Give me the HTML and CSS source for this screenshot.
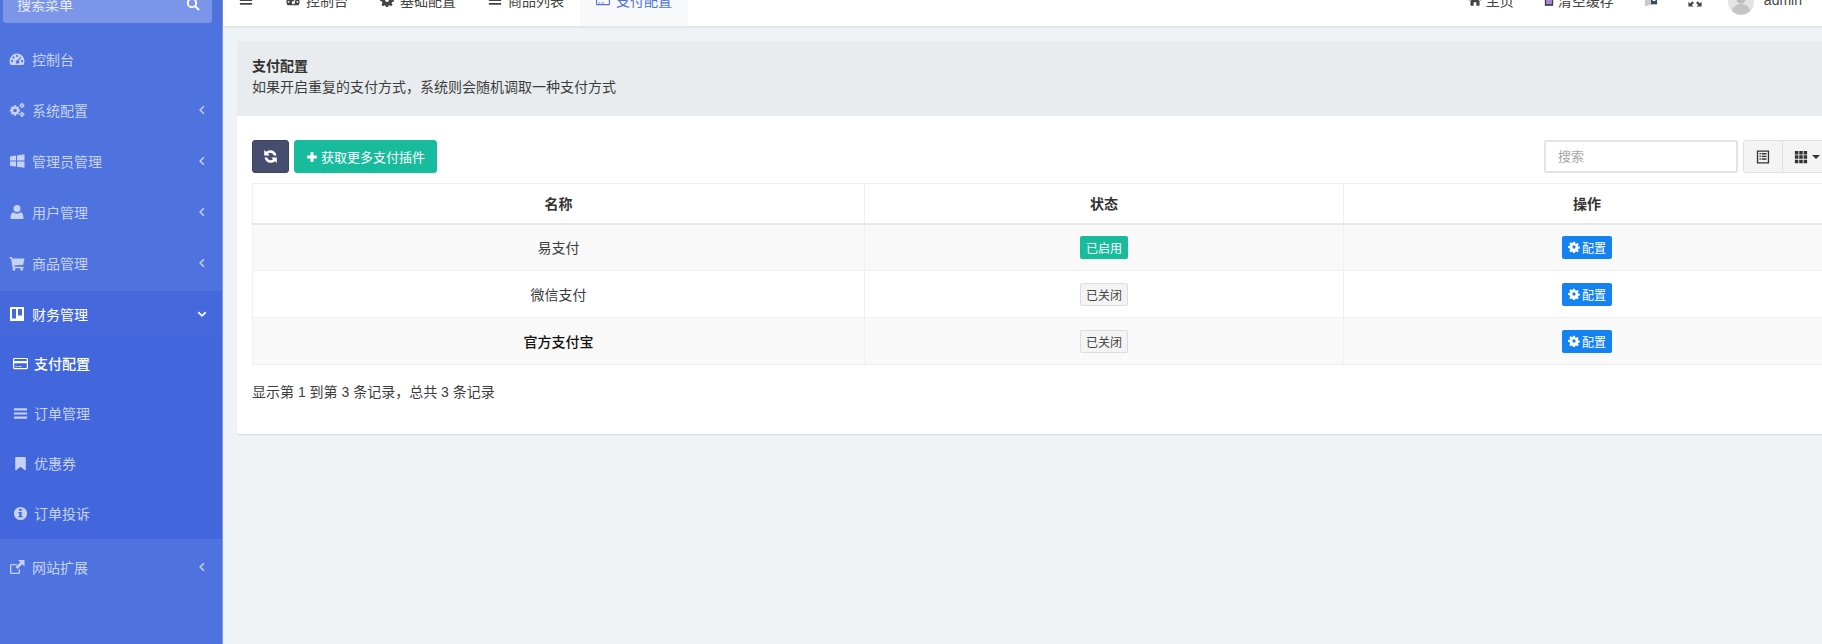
FILE: index.html
```html
<!DOCTYPE html>
<html lang="zh-CN">
<head>
<meta charset="utf-8">
<title>支付配置</title>
<link rel="stylesheet" href="styles.css">
</head>
<body>
<svg class="defs" width="0" height="0" aria-hidden="true">
  <symbol id="i-dash" viewBox="0 0 16 16"><path fill-rule="evenodd" d="M8 2.500a7.500 7.500 0 0 1 7.500 7.500c0 1.400-.4 2.700-1 3.800-.2.200-.4.200-.6.200H2.100c-.2 0-.4 0-.6-.2-.6-1.100-1-2.400-1-3.800A7.500 7.500 0 0 1 8 2.500zM3 9a1.100 1.100 0 1 0 0 2.200A1.100 1.100 0 0 0 3 9zm1.500-3.600a1.100 1.100 0 1 0 0 2.200 1.100 1.100 0 0 0 0-2.200zM8 3.900a1.100 1.100 0 1 0 0 2.200 1.100 1.100 0 0 0 0-2.200zM13 9a1.100 1.100 0 1 0 0 2.200A1.100 1.100 0 0 0 13 9zm-1.600-3.300L8.900 9.300a1.700 1.700 0 1 0 .9.600l2.400-3.700z"/></symbol>
  <symbol id="i-cogs" viewBox="0 0 16 16"><g fill="none" stroke="currentColor"><circle cx="6" cy="8.500" r="3" stroke-width="2.400"/><path stroke-width="2" d="M6 3.200v1.500M6 12.300v1.500M.8 8.500h1.500M9.700 8.500h1.500M2.400 4.900l1 1M8.600 11.100l1 1M2.400 12.100l1-1M8.600 5.900l1-1"/><circle cx="13" cy="3.500" r="1.400" stroke-width="1.500"/><circle cx="13" cy="12.500" r="1.400" stroke-width="1.500"/><path stroke-width="1.100" d="M13 .8v1M13 5.200v1M10.400 3.500h1M14.600 3.500h1M13 9.800v1M13 14.200v1M10.400 12.500h1M14.600 12.500h1"/></g></symbol>
  <symbol id="i-win" viewBox="0 0 16 16"><path d="M1 3.500l6-.9v5H1zM8 2.400l7.500-1.100v6.300H8zM1 8.600h6v5l-6-.9zM8 8.600h7.500v6.200L8 13.700z"/></symbol>
  <symbol id="i-user" viewBox="0 0 16 16"><circle cx="8" cy="4.500" r="3.500"/><path d="M2.500 15c-.6 0-1-.4-1-1 0-3 .8-5.500 3-5.800C5.300 9 6.600 9.500 8 9.500s2.700-.5 3.500-1.300c2.200.3 3 2.800 3 5.800 0 .6-.4 1-1 1z"/></symbol>
  <symbol id="i-cart" viewBox="0 0 16 16"><path d="M.5 2h2.700l.4 1.600H15.500l-1.300 6.100-9 .9.300 1.200h9v1.400H3.700L2 3.400H.5z"/><circle cx="5" cy="14.300" r="1.400"/><circle cx="12.700" cy="14.300" r="1.400"/></symbol>
  <symbol id="i-trello" viewBox="0 0 16 16"><path fill-rule="evenodd" d="M1.500 1h13c.3 0 .5.200.5.500v13c0 .3-.2.500-.5.500h-13a.5.500 0 0 1-.5-.5v-13c0-.3.200-.5.500-.5zM3 3v9.500h4V3zm6 0v6.500h4V3z"/></symbol>
  <symbol id="i-card" viewBox="0 0 16 16"><path fill-rule="evenodd" d="M1.500 2h13c.8 0 1.500.7 1.500 1.500v9c0 .8-.7 1.500-1.500 1.500h-13C.7 14 0 13.300 0 12.500v-9C0 2.700.7 2 1.500 2zM1.300 3.300v1.900h13.400V3.300zm0 4.300v5.100h13.400V7.600zM2.500 10.800h2.300v.9H2.500zm3.300 0h3.500v.9H5.800z"/></symbol>
  <symbol id="i-bars" viewBox="0 0 16 16"><path d="M1 2.500h14v2.200H1zM1 6.900h14v2.200H1zM1 11.300h14v2.200H1z"/></symbol>
  <symbol id="i-bookmark" viewBox="0 0 16 16"><path d="M3 1h10c.4 0 .6.300.6.700v13c0 .5-.5.700-.9.400L8 11.500l-4.700 3.600c-.4.300-.9.100-.9-.4v-13C2.400 1.300 2.600 1 3 1z"/></symbol>
  <symbol id="i-info" viewBox="0 0 16 16"><path fill-rule="evenodd" d="M8 1a7 7 0 1 1 0 14A7 7 0 0 1 8 1zM6.800 3v2.200h2.400V3zM5.800 6.400v1.300h1v3H5.800V12h4.400v-1.300h-1V6.400z"/></symbol>
  <symbol id="i-ext" viewBox="0 0 16 16"><path d="M12 9v3.500c0 .8-.7 1.500-1.500 1.500h-7C2.700 14 2 13.300 2 12.500v-7C2 4.700 2.700 4 3.500 4H9v1.300H3.800c-.3 0-.5.200-.5.500v6.400c0 .3.200.5.500.5h6.400c.3 0 .5-.2.500-.5V9z" transform="translate(-1 1)"/><path d="M9 1h6.500v6.500l-2.300-2.300L8.400 10 6.500 8.100l4.800-4.800z"/></symbol>
  <symbol id="i-left" viewBox="0 0 16 16"><path fill="none" stroke="currentColor" stroke-width="2" d="M10.500 3L5.500 8l5 5"/></symbol>
  <symbol id="i-down" viewBox="0 0 16 16"><path fill="none" stroke="currentColor" stroke-width="2.200" d="M3 5.500l5 5 5-5"/></symbol>
  <symbol id="i-search" viewBox="0 0 16 16"><circle cx="6.800" cy="6.800" r="4.800" fill="none" stroke="currentColor" stroke-width="2.200"/><path d="M10 11.600l1.600-1.600 3.900 3.900c.2.200.2.500 0 .7l-.9.900c-.2.200-.5.200-.7 0z"/></symbol>
  <symbol id="i-refresh" viewBox="0 0 16 16"><path d="M14.300 7h-2.900A3.600 3.600 0 0 0 5.300 5.100l1.800 1.800H1.300V1.100l1.900 1.900A6.700 6.700 0 0 1 14.300 7zM1.700 9h2.900a3.600 3.600 0 0 0 6.100 1.900L8.900 9.100h5.800v5.800l-1.900-1.900A6.700 6.700 0 0 1 1.700 9z"/></symbol>
  <symbol id="i-plus" viewBox="0 0 16 16"><path d="M6 1.500h4V6h4.500v4H10v4.500H6V10H1.500V6H6z"/></symbol>
  <symbol id="i-gear" viewBox="0 0 16 16"><path fill-rule="evenodd" d="M6.800 1h2.400l.4 2 1.300.6 1.700-1.100 1.700 1.700-1.100 1.700.6 1.300 2 .4v2.400l-2 .4-.6 1.300 1.100 1.700-1.700 1.700-1.700-1.100-1.300.6-.4 2H6.800l-.4-2-1.300-.6-1.700 1.100-1.700-1.700 1.100-1.700L2.200 9.600l-2-.4V6.800l2-.4.600-1.300-1.100-1.700 1.700-1.700 1.700 1.100 1.300-.6zM8 5.800a2.200 2.200 0 1 0 0 4.400 2.200 2.200 0 0 0 0-4.400z"/></symbol>
  <symbol id="i-home" viewBox="0 0 16 16"><path d="M8 1.500l7.500 6.300-.8 1L8 3.300 1.300 8.800l-.8-1zM8 4.600l5.200 4.300V14c0 .3-.2.500-.5.500H9.500v-4h-3v4H3.300c-.3 0-.5-.2-.5-.5V8.900z"/></symbol>
  <symbol id="i-trash" viewBox="0 0 12 16"><path d="M1 1h10v14H1z" fill="#3f3a4f"/><path d="M2.500 3h7v10h-7z" fill="#a78ad0"/></symbol>
  <symbol id="i-lang" viewBox="0 0 16 16"><path fill="#c9c9c9" d="M1 3l7-2v12l-7 2z"/><path fill="#3c4a66" d="M8 3h7v10H8z"/><path fill="#fff" d="M10 5h3v1h-3zM10 8h3v1h-3z"/></symbol>
  <symbol id="i-expand" viewBox="0 0 16 16"><path d="M8 0l3.500 3.500H9V7H7V3.500H4.500zM.5 15.500V10l2 2L5 9.500 6.800 11.300 4.300 13.800l2 1.700zM15.500 15.500V10l-2 2L11 9.500 9.200 11.300l2.500 2.500-2 1.700z"/></symbol>
  <symbol id="i-listalt" viewBox="0 0 16 16"><path fill-rule="evenodd" d="M1 .5h14v15H1zM2.500 2v12h11V2zM4 3.500h1.500V5H4zM6.500 3.500H12V5H6.500zM4 6.500h1.500V8H4zM6.500 6.500H12V8H6.500zM4 9.500h1.500V11H4zM6.500 9.500H12V11H6.500z"/></symbol>
  <symbol id="i-th" viewBox="0 0 16 16"><path d="M1 1h4v4H1zM6 1h4v4H6zM11 1h4v4h-4zM1 6h4v4H1zM6 6h4v4H6zM11 6h4v4h-4zM1 11h4v4H1zM6 11h4v4H6zM11 11h4v4h-4z"/></symbol>
</svg>

<div class="app">
  <aside class="sidebar">
    <div class="side-search">
      <span>搜索菜单</span>
      <svg class="ico side-search-ico"><use href="#i-search"/></svg>
    </div>
    <nav class="menu">
      <a class="menu-row"><svg class="ico"><use href="#i-dash"/></svg><span class="menu-text">控制台</span></a>
      <a class="menu-row"><svg class="ico"><use href="#i-cogs"/></svg><span class="menu-text">系统配置</span><svg class="chev"><use href="#i-left"/></svg></a>
      <a class="menu-row"><svg class="ico"><use href="#i-win"/></svg><span class="menu-text">管理员管理</span><svg class="chev"><use href="#i-left"/></svg></a>
      <a class="menu-row"><svg class="ico"><use href="#i-user"/></svg><span class="menu-text">用户管理</span><svg class="chev"><use href="#i-left"/></svg></a>
      <a class="menu-row"><svg class="ico"><use href="#i-cart"/></svg><span class="menu-text">商品管理</span><svg class="chev"><use href="#i-left"/></svg></a>
      <div class="menu-group">
        <a class="menu-row menu-row-open"><svg class="ico"><use href="#i-trello"/></svg><span class="menu-text">财务管理</span><svg class="chev"><use href="#i-down"/></svg></a>
        <div class="submenu">
          <a class="sub-row sub-row-active"><svg class="ico"><use href="#i-card"/></svg><span>支付配置</span></a>
          <a class="sub-row"><svg class="ico"><use href="#i-bars"/></svg><span>订单管理</span></a>
          <a class="sub-row"><svg class="ico"><use href="#i-bookmark"/></svg><span>优惠券</span></a>
          <a class="sub-row"><svg class="ico"><use href="#i-info"/></svg><span>订单投诉</span></a>
        </div>
      </div>
      <a class="menu-row"><svg class="ico"><use href="#i-ext"/></svg><span class="menu-text">网站扩展</span><svg class="chev"><use href="#i-left"/></svg></a>
    </nav>
  </aside>

  <div class="main">
    <header class="topbar">
      <a class="toggle"><svg class="ico"><use href="#i-bars"/></svg></a>
      <a class="tab"><svg class="ico"><use href="#i-dash"/></svg>控制台</a>
      <a class="tab"><svg class="ico"><use href="#i-gear"/></svg>基础配置</a>
      <a class="tab"><svg class="ico"><use href="#i-bars"/></svg>商品列表</a>
      <a class="tab tab-active"><svg class="ico"><use href="#i-card"/></svg>支付配置</a>
      <div class="top-right">
        <a class="top-link"><svg class="ico"><use href="#i-home"/></svg>主页</a>
        <a class="top-link"><svg class="ico ico-trash"><use href="#i-trash"/></svg>清空缓存</a>
        <a class="top-link"><svg class="ico ico-small"><use href="#i-lang"/></svg></a>
        <a class="top-link"><svg class="ico ico-small"><use href="#i-expand"/></svg></a>
        <a class="top-user">
          <svg class="avatar" viewBox="0 0 26 26"><circle cx="13" cy="13" r="13" fill="#e4e4e4"/><circle cx="13" cy="10" r="4.500" fill="#bdbdbd"/><path d="M4 22c1-5 5-7 9-7s8 2 9 7a13 13 0 0 1-18 0z" fill="#c4c4c4"/></svg>
          <span>admin</span>
        </a>
      </div>
    </header>

    <main class="content">
      <section class="box">
        <div class="box-head">
          <div class="box-title">支付配置</div>
          <div>如果开启重复的支付方式，系统则会随机调取一种支付方式</div>
        </div>
        <div class="box-body">
          <div class="toolbar">
            <button class="btn btn-dark"><svg class="ico"><use href="#i-refresh"/></svg></button>
            <button class="btn btn-green"><svg class="ico ico-plus"><use href="#i-plus"/></svg>获取更多支付插件</button>
            <input class="search" type="text" placeholder="搜索">
            <div class="btn-group">
              <button class="tool"><svg class="ico"><use href="#i-listalt"/></svg></button>
              <button class="tool tool-wide"><svg class="ico"><use href="#i-th"/></svg><span class="caret"></span></button>
            </div>
          </div>
          <table class="grid">
            <colgroup><col class="col-name"><col class="col-state"><col class="col-op"></colgroup>
            <thead>
              <tr><th>名称</th><th>状态</th><th>操作</th></tr>
            </thead>
            <tbody>
              <tr>
                <td>易支付</td>
                <td><span class="tag tag-on">已启用</span></td>
                <td><a class="tag tag-cfg"><svg class="ico ico-tag"><use href="#i-gear"/></svg>配置</a></td>
              </tr>
              <tr>
                <td>微信支付</td>
                <td><span class="tag tag-off">已关闭</span></td>
                <td><a class="tag tag-cfg"><svg class="ico ico-tag"><use href="#i-gear"/></svg>配置</a></td>
              </tr>
              <tr>
                <td class="strong">官方支付宝</td>
                <td><span class="tag tag-off">已关闭</span></td>
                <td><a class="tag tag-cfg"><svg class="ico ico-tag"><use href="#i-gear"/></svg>配置</a></td>
              </tr>
            </tbody>
          </table>
          <div class="summary">显示第 1 到第 3 条记录，总共 3 条记录</div>
        </div>
      </section>
    </main>
  </div>
</div>
</body>
</html>
```

FILE: styles.css
```css
* { box-sizing: border-box; }

html, body {
  margin: 0;
  height: 644px;
  overflow: hidden;
}

body {
  font-family: "Liberation Sans", "Noto Sans CJK SC", sans-serif;
  font-size: 14px;
  color: #3d3d3d;
  background: #f0f3f6;
}

.defs { display: block; height: 0; }

.ico {
  width: 14px;
  height: 14px;
  fill: currentColor;
  flex: none;
}

/* page is photographed scrolled down by 26px */
.app {
  display: flex;
  width: 1846px;
  height: 670px;
  margin-top: -26px;
}

.sidebar {
  width: 223px;
  flex: none;
  background: #4e72de;
  border-right: 1px solid #7d97e8;
  color: #c6d2f6;
  padding-top: 13px;
}

.side-search {
  display: flex;
  align-items: center;
  justify-content: space-between;
  height: 36px;
  margin: 0 10px 0 3px;
  padding: 0 12px 3px 14px;
  background: #7b95e8;
  border-radius: 3px;
  color: #e8edfb;
}

.side-search-ico { color: #fff; }

.menu { padding-top: 13px; }

.menu-row {
  display: flex;
  align-items: center;
  height: 46px;
  margin-bottom: 5px;
  padding: 0 14px 0 9px;
}

.menu-row > .ico {
  width: 16px;
  height: 16px;
}

.menu-text { margin-left: 7px; flex: 1; }

.chev {
  width: 12px;
  height: 12px;
  color: #c6d2f6;
  flex: none;
}

.menu-group { margin-bottom: 5px; }

.menu-row-open {
  margin-bottom: 0;
  background: #4569dd;
  color: #fff;
}

.menu-row-open .chev { color: #fff; }

.submenu {
  background: #4267dd;
  padding: 1px 0;
}

.sub-row {
  display: flex;
  align-items: center;
  gap: 6px;
  height: 50px;
  padding-left: 13px;
}

.sub-row .ico {
  width: 15px;
  height: 15px;
}

.sub-row-active {
  color: #fff;
  font-weight: 500;
}

.main {
  flex: 1;
  min-width: 0;
}

.topbar {
  display: flex;
  align-items: center;
  height: 52px;
  padding-left: 16px;
  background: #fff;
  color: #444;
  box-shadow: 0 1px 3px rgba(0, 0, 0, .1);
  position: relative;
}

.toggle {
  display: flex;
  padding-right: 17px;
}

.tab {
  display: flex;
  align-items: center;
  gap: 6px;
  height: 100%;
  padding: 0 16px;
}

.tab-active {
  background: #f8f9fb;
  color: #4e73df;
}

.top-right {
  display: flex;
  align-items: center;
  gap: 30px;
  margin-left: auto;
  padding-right: 44px;
}

.top-link {
  display: flex;
  align-items: center;
  gap: 4px;
}

.ico-trash { width: 10px; }
.ico-small { width: 14px; height: 14px; }

.top-user {
  display: flex;
  align-items: center;
  gap: 10px;
  margin-left: -4px;
}

.avatar {
  width: 26px;
  height: 26px;
  margin-top: 4px;
  flex: none;
}

.content { padding: 15px 0 0 14px; }

.box {
  background: #fff;
  border-radius: 3px;
  box-shadow: 0 1px 1px rgba(0, 0, 0, .1);
}

.box-head {
  height: 75px;
  padding: 15px 15px 0;
  background: #e8ecef;
  line-height: 21px;
}

.box-title {
  font-weight: 700;
  color: #333;
}

.box-body { padding: 24px 15px 32px; }

.toolbar {
  display: flex;
  align-items: stretch;
  height: 33px;
  margin-bottom: 10px;
}

.btn {
  display: flex;
  align-items: center;
  justify-content: center;
  border-radius: 3px;
  font: inherit;
  color: #fff;
  padding: 0;
}

.btn-dark {
  width: 37px;
  background: #474d6e;
  border: 1px solid #3d4363;
}

.btn-dark .ico { width: 15px; height: 15px; }

.btn-green {
  width: 143px;
  margin-left: 5px;
  gap: 3px;
  font-size: 13px;
  background: #18bc9c;
  border: 1px solid #18bc9c;
}

.ico-plus { width: 12px; height: 12px; }

.search {
  width: 194px;
  margin-left: auto;
  margin-right: 5px;
  padding: 0 12px;
  border: 2px solid #e3e4ea;
  font: inherit;
  font-size: 13px;
  border-radius: 2px;
}

.search::placeholder { color: #a8a8a8; }

.btn-group { display: flex; }

.tool {
  display: flex;
  align-items: center;
  justify-content: center;
  gap: 4px;
  width: 40px;
  padding: 0;
  background: #f4f4f4;
  border: 1px solid #e0e0e0;
  border-radius: 3px 0 0 3px;
  color: #333;
}

.tool-wide {
  width: 49px;
  margin-left: -1px;
  border-radius: 0 3px 3px 0;
}

.caret {
  width: 0;
  height: 0;
  border: 4px solid transparent;
  border-top-color: #333;
  border-bottom: 0;
}

.grid {
  width: 100%;
  border-collapse: collapse;
  table-layout: fixed;
  text-align: center;
}

.col-name { width: 612px; }
.col-state { width: 479px; }

.grid th, .grid td {
  border: 1px solid #f0f0f0;
  vertical-align: middle;
}

.grid th {
  height: 40px;
  font-weight: 700;
  color: #333;
  border-bottom: 2px solid #e7e7e7;
}

.grid td { height: 47px; }

.grid tbody tr:nth-child(odd) { background: #f9f9f9; }

.strong {
  color: #111;
  font-weight: 500;
}

.tag {
  display: inline-flex;
  align-items: center;
  justify-content: center;
  height: 23px;
  border-radius: 2px;
  font-size: 12px;
  vertical-align: middle;
}

.tag-on {
  width: 48px;
  background: #18bc9c;
  color: #fff;
}

.tag-off {
  width: 48px;
  background: #f4f4f4;
  border: 1px solid #ddd;
  color: #444;
}

.tag-cfg {
  width: 50px;
  gap: 2px;
  background: #1482f0;
  color: #fff;
}

.ico-tag { width: 12px; height: 12px; }

.summary {
  margin-top: 17px;
  line-height: 20px;
}
```
